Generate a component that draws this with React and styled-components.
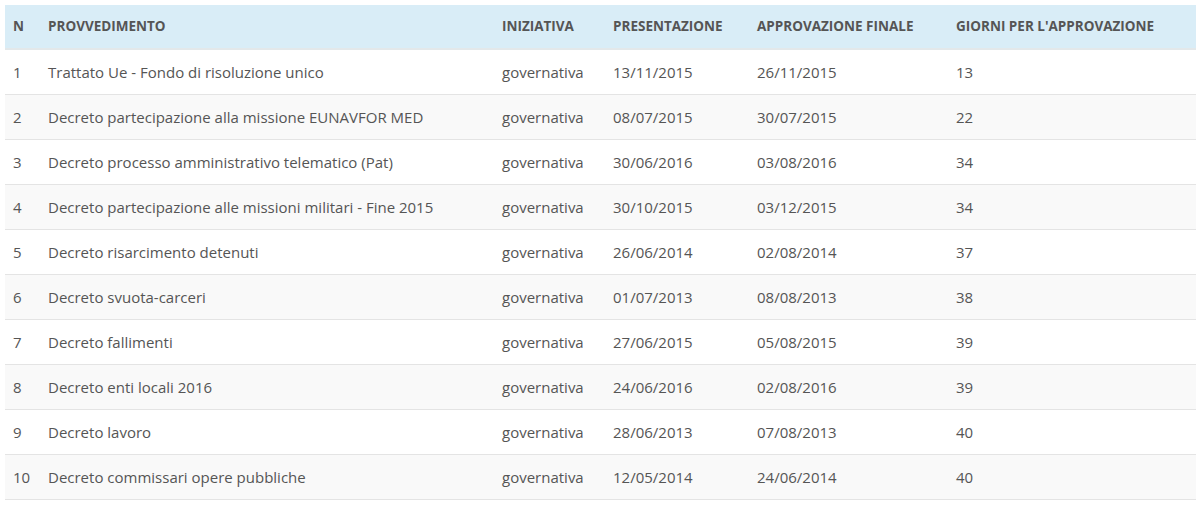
import React from "react";
import styled, { createGlobalStyle } from "styled-components";

const GlobalStyle = createGlobalStyle`
  html, body {
    margin: 0;
    padding: 0;
    background: #fff;
  }
  body {
    font-family: "Open Sans", "Liberation Sans", sans-serif;
    color: #555;
  }
`;

const Wrapper = styled.div`
  padding: 5px 4px 5px 5px;
`;

const Table = styled.table`
  width: 100%;
  border-collapse: collapse;
  table-layout: fixed;
  font-size: 15px;
`;

const Col = styled.col`
  width: ${(p) => (p.$w ? `${p.$w}px` : "auto")};
`;

const HeadRow = styled.tr`
  background: #d9edf7;
`;

const Th = styled.th`
  box-sizing: border-box;
  text-align: left;
  font-weight: 700;
  font-size: 13.5px;
  text-transform: uppercase;
  color: #555;
  height: 44px;
  padding: 0 8px;
  line-height: 19px;
  border-bottom: 2px solid #e3e8ea;
  white-space: nowrap;
`;

const Row = styled.tr`
  background: ${(p) => (p.$striped ? "#f9f9f9" : "#fff")};
`;

const Td = styled.td`
  box-sizing: border-box;
  height: 45px;
  padding: 0 8px;
  line-height: 20px;
  border-bottom: 1px solid #e4e4e4;
  color: #555;
  white-space: nowrap;
`;

const columns = [
  { label: "N", w: 35 },
  { label: "Provvedimento", w: 454 },
  { label: "Iniziativa", w: 111 },
  { label: "Presentazione", w: 144 },
  { label: "Approvazione finale", w: 199 },
  { label: "Giorni per l'approvazione" },
];

const rows = [
  ["1", "Trattato Ue - Fondo di risoluzione unico", "governativa", "13/11/2015", "26/11/2015", "13"],
  ["2", "Decreto partecipazione alla missione EUNAVFOR MED", "governativa", "08/07/2015", "30/07/2015", "22"],
  ["3", "Decreto processo amministrativo telematico (Pat)", "governativa", "30/06/2016", "03/08/2016", "34"],
  ["4", "Decreto partecipazione alle missioni militari - Fine 2015", "governativa", "30/10/2015", "03/12/2015", "34"],
  ["5", "Decreto risarcimento detenuti", "governativa", "26/06/2014", "02/08/2014", "37"],
  ["6", "Decreto svuota-carceri", "governativa", "01/07/2013", "08/08/2013", "38"],
  ["7", "Decreto fallimenti", "governativa", "27/06/2015", "05/08/2015", "39"],
  ["8", "Decreto enti locali 2016", "governativa", "24/06/2016", "02/08/2016", "39"],
  ["9", "Decreto lavoro", "governativa", "28/06/2013", "07/08/2013", "40"],
  ["10", "Decreto commissari opere pubbliche", "governativa", "12/05/2014", "24/06/2014", "40"],
];

export default function App() {
  return (
    <Wrapper>
      <GlobalStyle />
      <Table>
        <colgroup>
          {columns.map((c) => (
            <Col key={c.label} $w={c.w} />
          ))}
        </colgroup>
        <thead>
          <HeadRow>
            {columns.map((c) => (
              <Th key={c.label}>{c.label}</Th>
            ))}
          </HeadRow>
        </thead>
        <tbody>
          {rows.map((r, i) => (
            <Row key={r[0]} $striped={i % 2 === 1}>
              {r.map((cell, j) => (
                <Td key={j}>{cell}</Td>
              ))}
            </Row>
          ))}
        </tbody>
      </Table>
    </Wrapper>
  );
}
